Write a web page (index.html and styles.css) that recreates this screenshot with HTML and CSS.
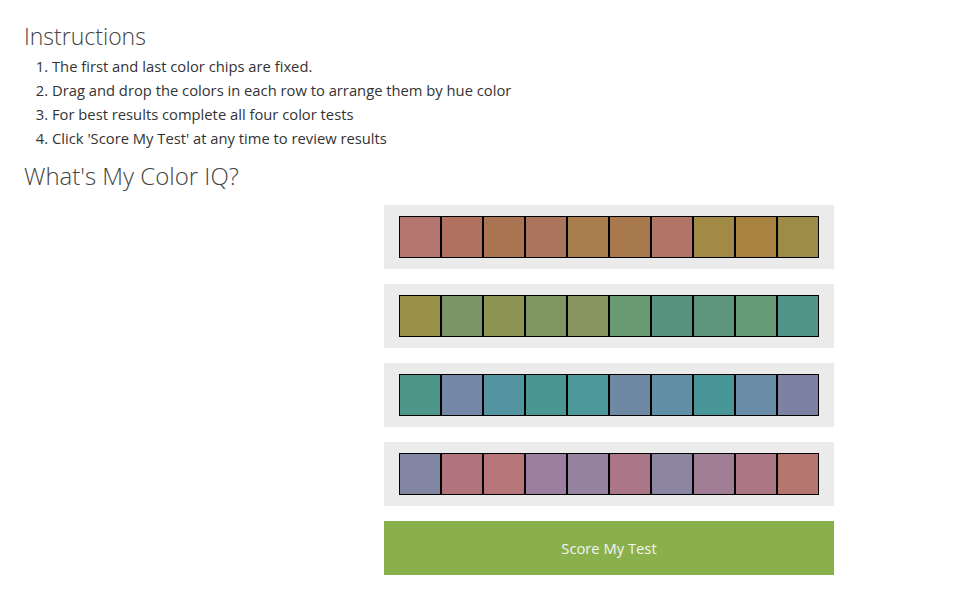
FILE: index.html
```html
<!DOCTYPE html>
<html lang="en">
<head>
    <meta charset="UTF-8">
    <meta name="viewport" content="width=device-width, initial-scale=1.0">
    <title>What's My Color IQ?</title>
    <link rel="stylesheet" href="styles.css">
</head>
<body>
    <div class="page">
        <h2>Instructions</h2>
        <ol class="steps">
            <li>The first and last color chips are fixed.</li>
            <li>Drag and drop the colors in each row to arrange them by hue color</li>
            <li>For best results complete all four color tests</li>
            <li>Click 'Score My Test' at any time to review results</li>
        </ol>

        <h2 class="test-title">What's My Color IQ?</h2>

        <div class="board">
            <div class="chip-row">
                <div class="chip" style="background:#b67670"></div>
                <div class="chip" style="background:#b0725f"></div>
                <div class="chip" style="background:#a87452"></div>
                <div class="chip" style="background:#aa755c"></div>
                <div class="chip" style="background:#a87e4d"></div>
                <div class="chip" style="background:#a7794c"></div>
                <div class="chip" style="background:#b37468"></div>
                <div class="chip" style="background:#a08a45"></div>
                <div class="chip" style="background:#a8823f"></div>
                <div class="chip" style="background:#9c8c47"></div>
            </div>
            <div class="chip-row">
                <div class="chip" style="background:#9a9249"></div>
                <div class="chip" style="background:#7c9567"></div>
                <div class="chip" style="background:#8d9452"></div>
                <div class="chip" style="background:#7f9562"></div>
                <div class="chip" style="background:#89965f"></div>
                <div class="chip" style="background:#6a9a72"></div>
                <div class="chip" style="background:#58937f"></div>
                <div class="chip" style="background:#5c957b"></div>
                <div class="chip" style="background:#649b76"></div>
                <div class="chip" style="background:#4f958a"></div>
            </div>
            <div class="chip-row">
                <div class="chip" style="background:#4e968a"></div>
                <div class="chip" style="background:#7587a6"></div>
                <div class="chip" style="background:#5493a0"></div>
                <div class="chip" style="background:#4a9690"></div>
                <div class="chip" style="background:#4b979a"></div>
                <div class="chip" style="background:#6f88a4"></div>
                <div class="chip" style="background:#618fa5"></div>
                <div class="chip" style="background:#489698"></div>
                <div class="chip" style="background:#698da8"></div>
                <div class="chip" style="background:#7d82a2"></div>
            </div>
            <div class="chip-row">
                <div class="chip" style="background:#8386a2"></div>
                <div class="chip" style="background:#b2747c"></div>
                <div class="chip" style="background:#b67578"></div>
                <div class="chip" style="background:#9c7f9e"></div>
                <div class="chip" style="background:#95839f"></div>
                <div class="chip" style="background:#ab7687"></div>
                <div class="chip" style="background:#8c86a2"></div>
                <div class="chip" style="background:#a17e96"></div>
                <div class="chip" style="background:#ad7685"></div>
                <div class="chip" style="background:#b57670"></div>
            </div>
            <button class="score-button">Score My Test</button>
        </div>
    </div>
</body>
</html>
```

FILE: styles.css
```css
body {
    margin: 0;
    font-family: "Open Sans", "Noto Sans", sans-serif;
    color: #333;
    background-color: white;
}

.page {
    padding: 20px 24px;
}

h2 {
    margin: 0;
    font-size: 23px;
    font-weight: 300;
    line-height: 32px;
    color: #444;
}

.test-title {
    font-size: 24px;
}

.steps {
    margin: 2px 0 10px 0;
    padding-left: 28px;
    font-size: 14.75px;
    line-height: 24px;
}

.board {
    margin: 13px 0 0 360px;
    width: 450px;
    display: flex;
    flex-direction: column;
    gap: 15px;
}

.chip-row {
    display: flex;
    padding: 11px 15px;
    background-color: #ebebeb;
}

.chip {
    width: 40px;
    height: 40px;
    border: 1px solid #000;
    cursor: move;
}

.score-button {
    height: 54px;
    border: none;
    background-color: #8ab04c;
    color: #f4f4f4;
    font-family: inherit;
    font-size: 14.75px;
    cursor: pointer;
}
```
